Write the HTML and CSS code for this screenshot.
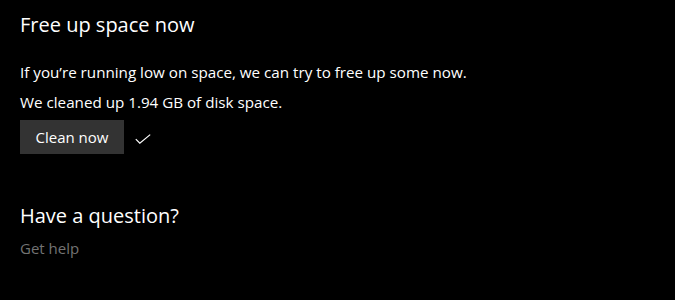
FILE: index.html
```html
<!DOCTYPE html>
<html>
<head>
<meta charset="utf-8">
<link rel="stylesheet" href="styles.css">
</head>
<body>
<main class="page">
  <section class="section">
    <h2 class="title">Free up space now</h2>
    <p class="text first">If you’re running low on space, we can try to free up some now.</p>
    <p class="text second">We cleaned up 1.94 GB of disk space.</p>
    <div class="actions">
      <button class="btn">Clean now</button>
      <svg class="check" width="16" height="10" viewBox="0 0 16 10"><path d="M0.8 5.2 L4.8 9.2 L15.2 0.6" fill="none" stroke="#fff" stroke-width="1.2"/></svg>
    </div>
  </section>
  <section class="section help">
    <h2 class="title">Have a question?</h2>
    <a class="link">Get help</a>
  </section>
</main>
</body>
</html>
```
FILE: styles.css
```css
html, body {
  margin: 0;
  padding: 0;
  background: #000;
}
body {
  width: 675px;
  height: 300px;
  overflow: hidden;
  font-family: "Open Sans", "Noto Sans", sans-serif;
  color: #fff;
}
.page {
  padding: 11px 20px 0 20px;
  display: flex;
  flex-direction: column;
}
.section {
  display: flex;
  flex-direction: column;
  align-items: flex-start;
}
.title {
  margin: 0;
  font-weight: 400;
  font-size: 20px;
  line-height: 28px;
}
.text {
  margin: 0;
  font-size: 15.2px;
  line-height: 20px;
}
.first { margin-top: 23px; }
.second { margin-top: 10px; }
.actions {
  margin-top: 8px;
  display: flex;
  align-items: center;
  gap: 11px;
}
.btn {
  width: 104px;
  height: 34px;
  background: #333;
  border: none;
  color: #fff;
  font-family: inherit;
  font-size: 15px;
  padding: 0;
}
.check { margin-top: 4px; }
.help { margin-top: 48px; }
.link {
  margin-top: 8px;
  font-size: 15px;
  line-height: 20px;
  color: #737373;
}
```
